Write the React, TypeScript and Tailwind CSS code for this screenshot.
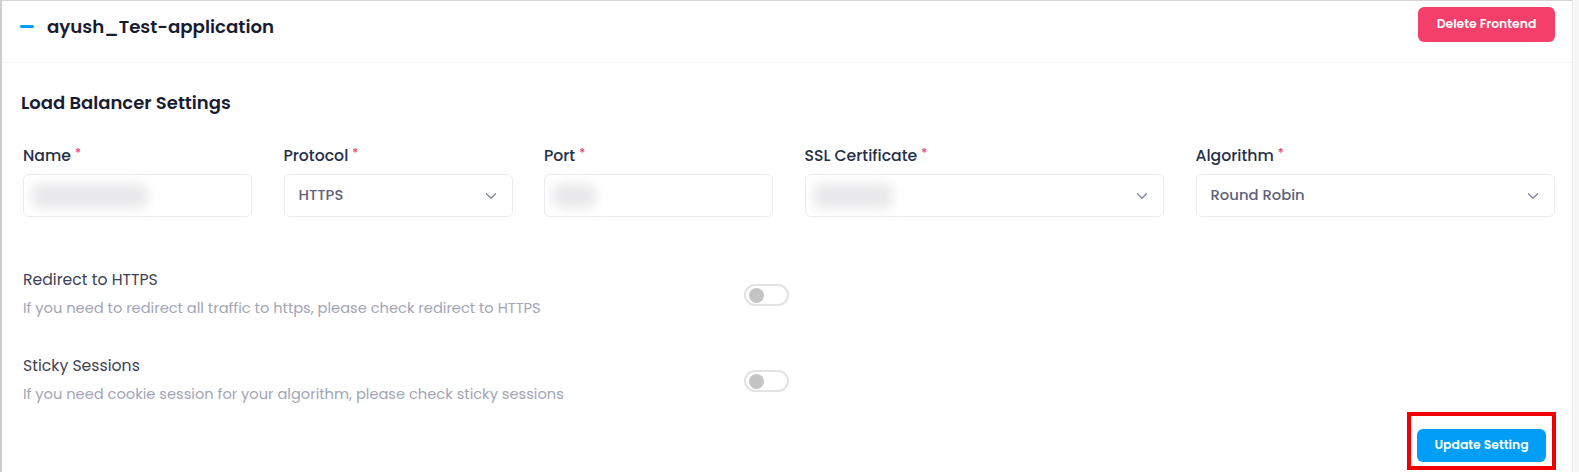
import { ChevronDown } from "lucide-react";

const font = { fontFamily: "Poppins, Inter, 'Noto Sans', sans-serif" };

interface FieldProps {
  label: string;
  value?: string;
  blur?: string;
  select?: boolean;
}

const Field: React.FC<FieldProps> = ({ label, value, blur, select }) => {
  return (
    <div className="flex flex-col">
      <label className="mb-[7px] flex h-[22px] items-center text-[15.7px] font-medium leading-[22px] text-[#252f4a]">
        {label}
        <span className="ml-[4px] -mt-[6px] text-[12px] text-[#f1416c]">*</span>
      </label>
      <div className="flex h-[43px] items-center justify-between rounded-md border border-[#eaebf1] bg-white pl-[14px] pr-[12px]">
        {value && (
          <span className="text-[14.8px] font-medium text-[#5e6278]">{value}</span>
        )}
        {blur && (
          <span className={`${blur} -ml-[6px] h-[24px] rounded-md bg-[#e8e8ea] blur-[6px]`} />
        )}
        {select && (
          <ChevronDown size={18} strokeWidth={1.6} className="text-[#7e8299]" />
        )}
      </div>
    </div>
  );
};

interface ToggleRowProps {
  title: string;
  desc: string;
}

const ToggleRow: React.FC<ToggleRowProps> = ({ title, desc }) => {
  return (
    <div className="flex w-[766px] items-center justify-between">
      <div className="flex flex-col">
        <p className="text-[15.7px] leading-[22px] text-[#3f4254]">{title}</p>
        <p className="mt-[7px] text-[14.65px] leading-[20px] text-[#a1a5b7]">{desc}</p>
      </div>
      <div className="mt-[3px] flex h-[22px] w-[45px] items-center rounded-full border-2 border-[#e2e2e2] bg-white px-[3px]">
        <span className="h-[15px] w-[15px] rounded-full bg-[#c4c4c4]" />
      </div>
    </div>
  );
};

export default function App() {
  return (
    <div className="min-h-screen w-full bg-[#f7f7f8]" style={font}>
      <div className="min-h-[472px] w-[1573px] border-t border-l-2 border-r border-t-[#d4d4d4] border-l-[#cfcfcf] border-r-[#efeff1] bg-white">
        <div className="flex h-[62px] items-start justify-between border-b border-[#f5f5f7] pl-[18px] pr-[17px] pt-[6px]">
          <div className="flex h-[35px] items-center pt-[4px]">
            <span className="h-[3px] w-[14px] rounded-full bg-[#009ef7]" />
            <h1 className="ml-[13px] text-[18.2px] font-semibold text-[#181c32]">
              ayush_Test-application
            </h1>
          </div>
          <button className="h-[35px] w-[137px] rounded-md bg-[#f43f6b] text-[12.4px] font-semibold text-white">
            Delete Frontend
          </button>
        </div>

        <div className="pl-[21px] pr-[17px] pt-[28px]">
          <h2 className="-ml-[2px] text-[18px] font-semibold leading-[24px] text-[#181c32]">
            Load Balancer Settings
          </h2>

          <div className="mt-[30px] grid grid-cols-[229px_229px_229px_1fr_1fr] gap-x-[31.5px]">
            <Field label="Name" blur="w-[115px]" />
            <Field label="Protocol" value="HTTPS" select />
            <Field label="Port" blur="w-[42px]" />
            <Field label="SSL Certificate" blur="w-[78px]" select />
            <Field label="Algorithm" value="Round Robin" select />
          </div>

          <div className="mt-[52px] flex flex-col gap-[37px]">
            <ToggleRow
              title="Redirect to HTTPS"
              desc="If you need to redirect all traffic to https, please check redirect to HTTPS"
            />
            <ToggleRow
              title="Sticky Sessions"
              desc="If you need cookie session for your algorithm, please check sticky sessions"
            />
          </div>

          <div className="-mr-[1px] mt-[8px] flex justify-end">
            <div className="border-4 border-[#f00000] px-[6px] pb-[4px] pt-[13px]">
              <button className="h-[33px] w-[129px] rounded-md bg-[#009ef7] text-[12.4px] font-semibold text-white">
                Update Setting
              </button>
            </div>
          </div>
        </div>
      </div>
    </div>
  );
}
